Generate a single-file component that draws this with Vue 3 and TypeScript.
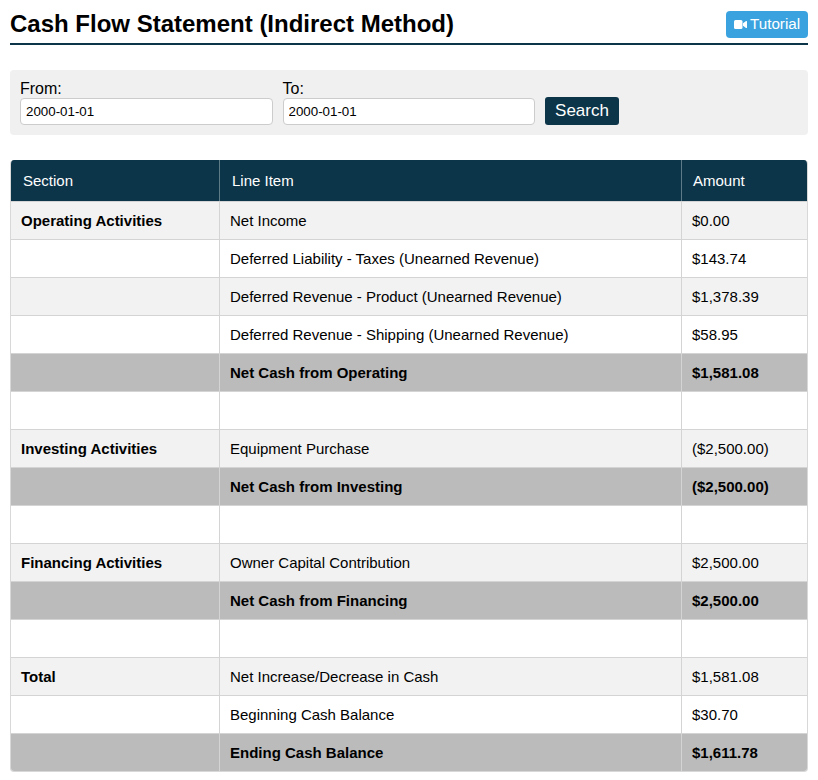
<script setup lang="ts">
interface Row {
  section?: string
  item?: string
  amount?: string
  total?: boolean
  shaded?: boolean
}

const rows: Row[] = [
  { section: 'Operating Activities', item: 'Net Income', amount: '$0.00', shaded: true },
  { item: 'Deferred Liability - Taxes (Unearned Revenue)', amount: '$143.74' },
  { item: 'Deferred Revenue - Product (Unearned Revenue)', amount: '$1,378.39', shaded: true },
  { item: 'Deferred Revenue - Shipping (Unearned Revenue)', amount: '$58.95' },
  { item: 'Net Cash from Operating', amount: '$1,581.08', total: true },
  {},
  { section: 'Investing Activities', item: 'Equipment Purchase', amount: '($2,500.00)', shaded: true },
  { item: 'Net Cash from Investing', amount: '($2,500.00)', total: true },
  {},
  { section: 'Financing Activities', item: 'Owner Capital Contribution', amount: '$2,500.00', shaded: true },
  { item: 'Net Cash from Financing', amount: '$2,500.00', total: true },
  {},
  { section: 'Total', item: 'Net Increase/Decrease in Cash', amount: '$1,581.08', shaded: true },
  { item: 'Beginning Cash Balance', amount: '$30.70' },
  { item: 'Ending Cash Balance', amount: '$1,611.78', total: true },
]
</script>

<template>
  <div class="page">
    <div class="header">
      <h1>Cash Flow Statement (Indirect Method)</h1>
      <a class="tutorial">
        <svg class="cam" viewBox="0 0 13 9" width="13" height="9">
          <rect x="0" y="0" width="8.5" height="9" rx="1.5" fill="#fff" />
          <path d="M9 3.2 L12 1 Q13 0.6 13 1.6 V7.4 Q13 8.4 12 8 L9 5.8 Z" fill="#fff" />
        </svg>
        <span>Tutorial</span>
      </a>
    </div>

    <form class="filters" @submit.prevent>
      <div class="field">
        <label>From:</label>
        <input type="text" value="2000-01-01" />
      </div>
      <div class="field">
        <label>To:</label>
        <input type="text" value="2000-01-01" />
      </div>
      <button class="search">Search</button>
    </form>

    <table class="report">
      <colgroup>
        <col class="c1" />
        <col class="c2" />
        <col class="c3" />
      </colgroup>
      <thead>
        <tr>
          <th>Section</th>
          <th>Line Item</th>
          <th class="amount">Amount</th>
        </tr>
      </thead>
      <tbody>
        <tr v-for="(row, i) in rows" :key="i" :class="{ total: row.total, shaded: row.shaded }">
          <td class="section">{{ row.section }}</td>
          <td>{{ row.item }}</td>
          <td>{{ row.amount }}</td>
        </tr>
      </tbody>
    </table>
  </div>
</template>

<style scoped>
.page {
  padding: 10px;
  font-family: "Liberation Sans", Arial, sans-serif;
  color: #000;
}

.header {
  display: flex;
  justify-content: space-between;
  align-items: flex-start;
  height: 33px;
  border-bottom: 2px solid #0d3549;
  margin-bottom: 25px;
}

h1 {
  margin: 0;
  font-size: 24px;
  line-height: 28px;
  font-weight: 700;
  color: #000;
}

.tutorial {
  display: flex;
  align-items: center;
  gap: 4px;
  height: 27px;
  margin-top: 1px;
  padding: 0 7px 0 8px;
  box-sizing: border-box;
  width: 82px;
  background: #3aa3df;
  color: #fff;
  border-radius: 4px;
  font-size: 15.2px;
}

.tutorial span {
  margin-top: -2px;
  margin-left: -1px;
}

.filters {
  display: flex;
  align-items: flex-end;
  gap: 10px;
  background: #f0f0f0;
  border-radius: 4px;
  padding: 10px;
  height: 65px;
  box-sizing: border-box;
}

.field {
  display: flex;
  flex-direction: column;
  width: 252.5px;
}

label {
  font-size: 16px;
  line-height: 18px;
}

input {
  height: 27px;
  box-sizing: border-box;
  border: 1px solid #ccc;
  border-radius: 4px;
  padding: 0 5px;
  background: #fff;
  font-family: inherit;
  font-size: 13.33px;
  color: #000;
  outline: none;
}

.search {
  height: 28px;
  width: 74px;
  padding: 0;
  border: none;
  border-radius: 3px;
  background: #0d3549;
  color: #fff;
  font-family: inherit;
  font-size: 17px;
}

.report {
  width: 798px;
  margin-top: 25px;
  border-collapse: separate;
  border-spacing: 0;
  table-layout: fixed;
  border-radius: 4px;
  overflow: hidden;
  border: 1px solid #d8d8d8;
  border-top: none;
  box-sizing: border-box;
  font-size: 15px;
}

.c1 { width: 208px; }
.c3 { width: 126px; }

th {
  height: 41px;
  box-sizing: border-box;
  padding: 0 12px;
  background: #0d3549;
  color: #fff;
  font-weight: 400;
  text-align: left;
  border-left: 1px solid #5d7a88;
}

th:first-child { border-left: none; }

th.amount { padding-left: 11px; }

td {
  height: 38px;
  box-sizing: border-box;
  padding: 0 10px;
  border-left: 1px solid #d4d4d4;
  border-top: 1px solid #d4d4d4;
  background: #fff;
}

td:first-child { border-left: none; }

tr.shaded td { background: #f2f2f2; }

.section { font-weight: 700; }

tbody tr.total td {
  background: #bbb;
  font-weight: 700;
}
</style>
